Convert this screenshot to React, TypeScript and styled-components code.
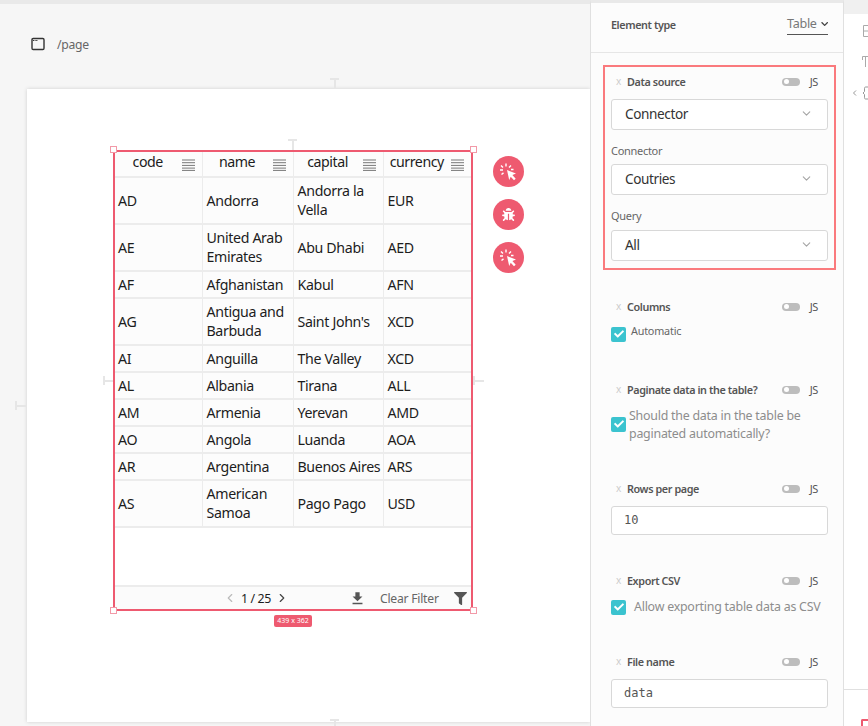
import React from 'react';
import styled, { createGlobalStyle } from 'styled-components';
import { FaBug, FaCheck, FaChevronDown, FaFilter } from 'react-icons/fa';
import { FiChevronDown, FiChevronLeft, FiChevronRight } from 'react-icons/fi';
import { MdFileDownload } from 'react-icons/md';

const GlobalStyle = createGlobalStyle`
  html, body {
    margin: 0;
    padding: 0;
    height: 726px;
    overflow: hidden;
    font-family: 'Noto Sans', 'Open Sans', sans-serif;
    color: #222;
  }
`;

const Screen = styled.div`
  display: flex;
  width: 868px;
  height: 726px;
  overflow: hidden;
`;

const Workspace = styled.div`
  width: 590px;
  height: 726px;
  flex: none;
  background: #f6f6f6;
  border-top: 4px solid #e9e9e9;
  box-sizing: border-box;
  overflow: hidden;
`;

const PathBar = styled.div`
  display: flex;
  align-items: center;
  gap: 12px;
  height: 26px;
  margin: 27px 0 0 31px;
  font-size: 12.2px;
  letter-spacing: -0.3px;
  color: #666;
`;

const Sheet = styled.div`
  position: relative;
  margin: 32px 0 0 27px;
  height: 633px;
  background: #fff;
  box-shadow: 0 0 4px rgba(0, 0, 0, 0.16);
  padding: 61px 0 0 86px;
  box-sizing: border-box;
`;

const Widget = styled.div`
  position: relative;
  width: 360px;
  height: 461px;
  box-sizing: border-box;
  border: 2px solid #ee5a70;
  display: flex;
  flex-direction: column;
  background: #fff;
`;

const Table = styled.table`
  width: 356px;
  table-layout: fixed;
  border-collapse: collapse;
  background: #fcfcfc;
  font-size: 14.2px;
  letter-spacing: -0.35px;
  line-height: 19px;
  color: #1d1d1d;
`;

const HeadCell = styled.th`
  position: relative;
  height: 25px;
  padding: 0 21px 5px 0;
  font-weight: 400;
  font-size: 14.2px;
  letter-spacing: -0.45px;
  text-align: center;
  border-right: 1px solid #ececec;
  border-bottom: 2px solid #ececec;
  box-sizing: border-box;
  &:last-child {
    border-right: none;
  }
`;

const MenuLines = styled.svg`
  position: absolute;
  right: 7px;
  top: 7px;
`;

const Row = styled.tr<{ $tall?: boolean }>`
  height: ${(p) => (p.$tall ? '47px' : '27px')};
`;

const Cell = styled.td`
  padding: 0 0 1px 4px;
  border-right: 1px solid #ececec;
  border-bottom: 2px solid #ececec;
  box-sizing: border-box;
  &:first-child {
    padding-left: 3px;
  }
  &:last-child {
    border-right: none;
  }
`;

const Spacer = styled.div`
  flex: 1;
`;

const TableFooter = styled.div`
  display: flex;
  align-items: center;
  height: 22px;
  background: #fbfbfb;
  border-top: 2px solid #ececec;
  font-size: 12.2px;
  letter-spacing: -0.25px;
  color: #666;
`;

const Pager = styled.div`
  display: flex;
  align-items: center;
  gap: 4px;
  margin-left: 108px;
  width: 126px;
  color: #1d1d1d;
  font-size: 12.4px;
  letter-spacing: -0.4px;
`;

const ClearFilter = styled.span`
  margin: 0 15px 0 14px;
`;

const Handle = styled.span<{ $x: 'left' | 'right'; $y: 'top' | 'bottom' }>`
  position: absolute;
  width: 5px;
  height: 5px;
  background: #fff;
  border: 1px solid #f29aa8;
  ${(p) => p.$x}: ${(p) => (p.$x === 'left' ? -5 : -6)}px;
  ${(p) => p.$y}: ${(p) => (p.$y === 'top' ? -6 : -5)}px;
`;

const SizeBadge = styled.span`
  position: absolute;
  left: 159px;
  top: 463px;
  width: 38px;
  height: 12px;
  border-radius: 2px;
  background: #ee5a70;
  color: #fff;
  font-size: 7px;
  line-height: 12px;
  text-align: center;
`;

const Guide = styled.span<{ $vertical?: boolean }>`
  position: absolute;
  width: ${(p) => (p.$vertical ? '9px' : '11px')};
  height: ${(p) => (p.$vertical ? '11px' : '9px')};
  ${(p) =>
    p.$vertical
      ? `border-top: 2px solid #e6e6e6; &::after { content: ''; position: absolute; left: 3.5px; top: 0; width: 2px; height: 9px; background: #e6e6e6; }`
      : `border-left: 2px solid #e6e6e6; &::after { content: ''; position: absolute; top: 3.5px; left: 0; width: 9px; height: 2px; background: #e6e6e6; }`}
`;

const Actions = styled.div`
  position: absolute;
  left: 466px;
  top: 67px;
  display: flex;
  flex-direction: column;
  gap: 12px;
`;

const ActionButton = styled.span`
  display: flex;
  align-items: center;
  justify-content: center;
  width: 31px;
  height: 31px;
  border-radius: 50%;
  background: #ee5a70;
  color: #fff;
`;

const Panel = styled.aside`
  width: 254px;
  height: 726px;
  flex: none;
  box-sizing: border-box;
  background: #fcfcfc;
  border-left: 1px solid #e0e0e0;
  border-right: 1px solid #e0e0e0;
  border-top: 3px solid #e9e9e9;
`;

const TypeRow = styled.div`
  display: flex;
  align-items: center;
  justify-content: space-between;
  height: 42px;
  padding: 0 15px 7px 20px;
  border-bottom: 1px solid #e6e6e6;
`;

const TypeLabel = styled.span`
  font-size: 10.8px;
  letter-spacing: -0.4px;
  font-weight: 600;
  color: #555;
`;

const TypeSelect = styled.span`
  display: flex;
  align-items: center;
  gap: 4px;
  height: 22px;
  width: 41px;
  box-sizing: border-box;
  font-size: 12.6px;
  letter-spacing: -0.3px;
  color: #777;
  border-bottom: 1px solid #555;
  svg {
    color: #444;
  }
`;

const Group = styled.div`
  margin: 12px 7px 0 12px;
  height: 205px;
  box-sizing: border-box;
  padding: 4px 6px 0 6px;
  border: 2px solid #fa7a7d;
`;

const Field = styled.div<{ $top: number }>`
  margin: ${(p) => p.$top}px 15px 0 20px;
`;

const LabelRow = styled.div`
  display: flex;
  align-items: center;
  height: 20px;
  padding-left: 5px;
  font-size: 10.8px;
  letter-spacing: -0.4px;
  font-weight: 600;
  color: #555;
`;

const CrossMark = styled.span`
  width: 11px;
  font-size: 10px;
  font-weight: 400;
  color: #ccc;
`;

const Toggle = styled.span`
  position: relative;
  margin: 1px 0 0 auto;
  width: 18px;
  height: 8px;
  border-radius: 4px;
  background: #bdbdbd;
  &::after {
    content: '';
    position: absolute;
    left: 2px;
    top: 1.5px;
    width: 5px;
    height: 5px;
    border-radius: 50%;
    background: #fff;
  }
`;

const JsTag = styled.span`
  margin: 0 10px;
  font-size: 11px;
  font-weight: 400;
  color: #555;
`;

const SelectBox = styled.div<{ $top?: number }>`
  display: flex;
  align-items: center;
  justify-content: space-between;
  height: 31px;
  box-sizing: border-box;
  margin-top: ${(p) => p.$top ?? 0}px;
  padding: 0 14px 2px 13px;
  border: 1px solid #d8d8d8;
  border-radius: 3px;
  background: #fff;
  font-size: 13.6px;
  letter-spacing: -0.4px;
  color: #333;
  svg {
    color: #a5a5a5;
  }
`;

const SubLabel = styled.div<{ $height: number }>`
  height: ${(p) => p.$height}px;
  padding-top: 12px;
  box-sizing: border-box;
  font-size: 11px;
  letter-spacing: -0.3px;
  line-height: 18px;
  color: #666;
`;

const MonoInput = styled.div`
  height: 29px;
  box-sizing: border-box;
  margin-top: 8px;
  padding-left: 12px;
  border: 1px solid #d8d8d8;
  border-radius: 3px;
  background: #fff;
  font-family: 'DejaVu Sans Mono', 'Liberation Mono', monospace;
  font-size: 12px;
  line-height: 27px;
  color: #555;
`;

const CheckRow = styled.div<{ $gap: number; $top: number }>`
  display: flex;
  align-items: center;
  gap: ${(p) => p.$gap}px;
  margin-top: ${(p) => p.$top}px;
`;

const CheckBox = styled.span`
  display: flex;
  align-items: center;
  justify-content: center;
  flex: none;
  width: 15px;
  height: 15px;
  border-radius: 2px;
  background: #3bc3cf;
  color: #fff;
`;

const CheckText = styled.span<{ $strong?: boolean; $shift?: number }>`
  font-size: ${(p) => (p.$strong ? '10.8px' : '12.4px')};
  letter-spacing: ${(p) => (p.$strong ? '-0.2px' : '-0.23px')};
  line-height: 18px;
  white-space: nowrap;
  color: ${(p) => (p.$strong ? '#666' : '#8d8d8d')};
  position: relative;
  top: ${(p) => p.$shift ?? 0}px;
`;

const Rail = styled.div`
  flex: 1;
  background: #fff;
  display: flex;
  flex-direction: column;
  align-items: flex-end;
  overflow: hidden;
`;

const RailTop = styled.div`
  width: 100%;
  height: 14px;
  background: #f0f0f0;
`;

const RailIcons = styled.div`
  display: flex;
  flex-direction: column;
  align-items: flex-end;
  gap: 19px;
  margin-top: 11px;
`;

const RailDivider = styled.div`
  width: 100%;
  margin-top: auto;
  height: 37px;
  box-sizing: border-box;
  border-top: 1px solid #e0e0e0;
  display: flex;
  justify-content: flex-end;
  align-items: flex-end;
`;

const RailBadge = styled.span`
  width: 5px;
  height: 5px;
  border: 2px solid #ee5a70;
  border-right: none;
  border-bottom: none;
  border-radius: 2px 0 0 0;
`;

const rows: { cells: string[]; tall?: boolean }[] = [
  { cells: ['AD', 'Andorra', 'Andorra la Vella', 'EUR'], tall: true },
  { cells: ['AE', 'United Arab Emirates', 'Abu Dhabi', 'AED'], tall: true },
  { cells: ['AF', 'Afghanistan', 'Kabul', 'AFN'] },
  { cells: ['AG', 'Antigua and Barbuda', "Saint John's", 'XCD'], tall: true },
  { cells: ['AI', 'Anguilla', 'The Valley', 'XCD'] },
  { cells: ['AL', 'Albania', 'Tirana', 'ALL'] },
  { cells: ['AM', 'Armenia', 'Yerevan', 'AMD'] },
  { cells: ['AO', 'Angola', 'Luanda', 'AOA'] },
  { cells: ['AR', 'Argentina', 'Buenos Aires', 'ARS'] },
  { cells: ['AS', 'American Samoa', 'Pago Pago', 'USD'], tall: true },
];

const ClickIcon = () => (
  <svg width="19" height="19" viewBox="0 0 19 19" fill="none">
    <path d="M8 8l9 3.6-3.6 1.5 3.3 3.6-1.7 1.6-3.3-3.6-1.5 3.4z" fill="#fff" />
    <path
      d="M7 1.5v3M2 3.5l2 2M1 8h3M2.5 12.5l2-1.6M12 3.5l-2 2M14.5 7.5H12"
      stroke="#fff"
      strokeWidth="1.4"
    />
  </svg>
);

const ColumnMenu = () => (
  <MenuLines width="13" height="12" viewBox="0 0 13 12">
    <path d="M0 1h13M0 3.7h13M0 6.4h13M0 9.1h13M0 11.4h13" stroke="#777" strokeWidth="1" />
  </MenuLines>
);

const FieldLabel = ({ text }: { text: string }) => (
  <LabelRow>
    <CrossMark>x</CrossMark>
    {text}
    <Toggle />
    <JsTag>JS</JsTag>
  </LabelRow>
);

const Tick = () => (
  <CheckBox>
    <FaCheck size={10} />
  </CheckBox>
);

const App: React.FC = () => {
  return (
    <Screen>
      <GlobalStyle />
      <Workspace>
        <PathBar>
          <svg width="14" height="14" viewBox="0 0 14 14" fill="none">
            <rect x="1" y="1.5" width="12" height="11" rx="1.2" stroke="#333" strokeWidth="1.4" />
            <path d="M2 3.5h5" stroke="#333" strokeWidth="1.2" strokeDasharray="1 .6" />
          </svg>
          /page
        </PathBar>
        <Sheet>
          <Guide $vertical style={{ left: 303, top: -11 }} />
          <Guide $vertical style={{ left: 261, top: 50 }} />
          <Guide style={{ left: 76, top: 287 }} />
          <Guide style={{ left: 446, top: 287 }} />
          <Guide style={{ left: -12, top: 312 }} />
          <Guide $vertical style={{ left: 303, top: 630 }} />
          <Widget>
            <Table>
              <colgroup>
                <col style={{ width: 87 }} />
                <col style={{ width: 91 }} />
                <col style={{ width: 90 }} />
                <col />
              </colgroup>
              <thead>
                <tr>
                  {['code', 'name', 'capital', 'currency'].map((title) => (
                    <HeadCell key={title}>
                      {title}
                      <ColumnMenu />
                    </HeadCell>
                  ))}
                </tr>
              </thead>
              <tbody>
                {rows.map((row) => (
                  <Row key={row.cells[0]} $tall={row.tall}>
                    {row.cells.map((value) => (
                      <Cell key={value}>{value}</Cell>
                    ))}
                  </Row>
                ))}
              </tbody>
            </Table>
            <Spacer />
            <TableFooter>
              <Pager>
                <FiChevronLeft size={14} color="#bbb" />
                <span>1 / 25</span>
                <FiChevronRight size={14} color="#444" />
              </Pager>
              <MdFileDownload size={17} color="#555" />
              <ClearFilter>Clear Filter</ClearFilter>
              <FaFilter size={13} color="#555" />
            </TableFooter>
            <Handle $x="left" $y="top" />
            <Handle $x="right" $y="top" />
            <Handle $x="left" $y="bottom" />
            <Handle $x="right" $y="bottom" />
            <SizeBadge>439 x 362</SizeBadge>
          </Widget>
          <Actions>
            <ActionButton>
              <ClickIcon />
            </ActionButton>
            <ActionButton>
              <FaBug size={13} />
            </ActionButton>
            <ActionButton>
              <ClickIcon />
            </ActionButton>
          </Actions>
        </Sheet>
      </Workspace>
      <Panel>
        <TypeRow>
          <TypeLabel>Element type</TypeLabel>
          <TypeSelect>
            Table
            <FaChevronDown size={8} />
          </TypeSelect>
        </TypeRow>
        <Group>
          <FieldLabel text="Data source" />
          <SelectBox $top={8}>
            Connector
            <FiChevronDown size={13} />
          </SelectBox>
          <SubLabel $height={34}>Connector</SubLabel>
          <SelectBox>
            Coutries
            <FiChevronDown size={13} />
          </SelectBox>
          <SubLabel $height={35}>Query</SubLabel>
          <SelectBox>
            All
            <FiChevronDown size={13} />
          </SelectBox>
        </Group>
        <Field $top={26}>
          <FieldLabel text="Columns" />
          <CheckRow $gap={5} $top={9}>
            <Tick />
            <CheckText $strong $shift={-3}>
              Automatic
            </CheckText>
          </CheckRow>
        </Field>
        <Field $top={36}>
          <FieldLabel text="Paginate data in the table?" />
          <CheckRow $gap={3} $top={7}>
            <Tick />
            <CheckText $shift={1}>
              Should the data in the table be
              <br />
              paginated automatically?
            </CheckText>
          </CheckRow>
        </Field>
        <Field $top={36}>
          <FieldLabel text="Rows per page" />
          <MonoInput>10</MonoInput>
        </Field>
        <Field $top={35}>
          <FieldLabel text="Export CSV" />
          <CheckRow $gap={8} $top={8}>
            <Tick />
            <CheckText>Allow exporting table data as CSV</CheckText>
          </CheckRow>
        </Field>
        <Field $top={35}>
          <FieldLabel text="File name" />
          <MonoInput>data</MonoInput>
        </Field>
      </Panel>
      <Rail>
        <RailTop />
        <RailIcons>
          <svg width="5" height="12" viewBox="0 0 5 12" fill="none" stroke="#aaa">
            <path d="M5 .5H.5v11H5M.5 6H5" />
          </svg>
          <svg width="6" height="11" viewBox="0 0 6 11" fill="none" stroke="#aaa">
            <path d="M.5 4V.5H6M3.5.5V11" />
          </svg>
          <svg width="17" height="14" viewBox="0 0 17 14" fill="none" stroke="#999">
            <path d="M5 4.5L2.5 7 5 9.5" />
            <path d="M17 1h-2.5c-1 0-1 1-1 2v2.5L12 7l1.5 1.5V11c0 1 0 2 1 2H17" />
          </svg>
        </RailIcons>
        <RailDivider>
          <RailBadge />
        </RailDivider>
      </Rail>
    </Screen>
  );
};

export default App;
